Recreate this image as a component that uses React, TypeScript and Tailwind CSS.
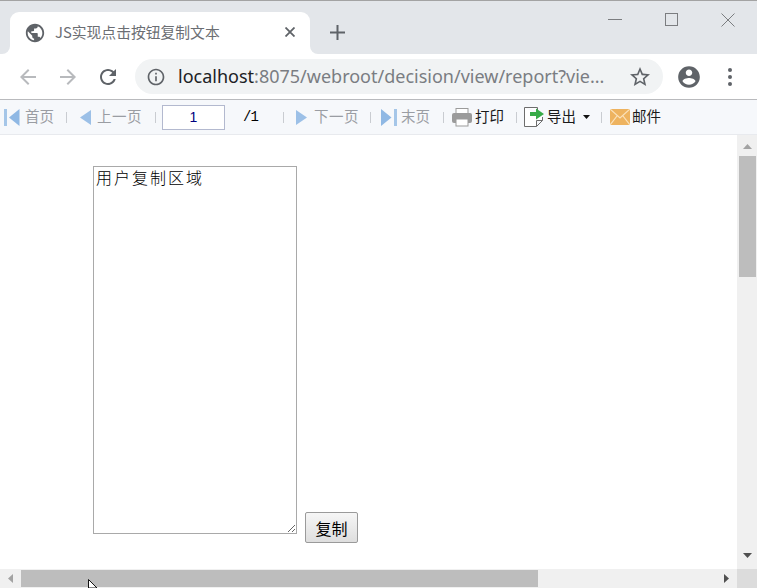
import React from 'react';

const cjk = "font-['Noto_Sans_CJK_SC','Noto_Sans',sans-serif]";

function Icon({ d, className }: { d: string; className: string }) {
  return (
    <svg viewBox="0 0 24 24" fill="currentColor" className={className}>
      <path d={d} fillRule="evenodd" />
    </svg>
  );
}

function Sep({ className }: { className: string }) {
  return <span className={`w-px h-[11px] bg-[#c9ccd1] shrink-0 ${className}`} />;
}

function Label({ children, dim, className = '' }: { children: string; dim?: boolean; className?: string }) {
  return (
    <span className={`text-[14.500px] leading-none mb-[2px] whitespace-nowrap shrink-0 ${dim ? 'text-[#9a9da3]' : 'text-[#1a1a1a]'} ${className}`}>
      {children}
    </span>
  );
}

function Toolbar() {
  return (
    <div className={`h-[35px] flex items-center bg-[#f6f8fb] border-b border-[#e8eaee] ${cjk}`}>
      <svg viewBox="0 0 16 17" className="w-[16px] h-[17px] ml-[4px] shrink-0">
        <rect x="0" y="0" width="3" height="17" fill="#a5c6e8" />
        <path d="M15.500 0v17L5 8.500z" fill="#8fb8e4" />
      </svg>
      <Label dim className="ml-[5px]">首页</Label>
      <Sep className="ml-[12px]" />
      <svg viewBox="0 0 11 15" className="w-[11px] h-[15px] ml-[13px] shrink-0">
        <path d="M11 0v15L0 7.500z" fill="#9cc0e7" />
      </svg>
      <Label dim className="ml-[6px] tracking-[0.500px]">上一页</Label>
      <Sep className="ml-[13px]" />
      <div className="ml-[6px] w-[63px] h-[25px] shrink-0 bg-white border border-[#b3b9cf] flex items-center justify-center text-[14px] text-[#000080] font-['Liberation_Sans',sans-serif]">
        1
      </div>
      <span className="ml-[18px] w-[15px] shrink-0 text-[14px] -tracking-[1px] text-black font-['Liberation_Mono',monospace]">/1</span>
      <Sep className="ml-[25px]" />
      <svg viewBox="0 0 11 15" className="w-[11px] h-[15px] ml-[12px] shrink-0">
        <path d="M0 0v15L11 7.500z" fill="#9cc0e7" />
      </svg>
      <Label dim className="ml-[7px] tracking-[0.500px]">下一页</Label>
      <Sep className="ml-[11px]" />
      <svg viewBox="0 0 16 17" className="w-[16px] h-[17px] ml-[10px] shrink-0">
        <path d="M0 0v17L10.500 8.500z" fill="#8fb8e4" />
        <rect x="13" y="0" width="3" height="17" fill="#a5c6e8" />
      </svg>
      <Label dim className="ml-[4px]">末页</Label>
      <Sep className="ml-[13px]" />
      <svg viewBox="0 0 20 19" className="w-[20px] h-[19px] ml-[8px] shrink-0">
        <rect x="4" y="0.500" width="12" height="5" fill="#fff" stroke="#9b9b9b" />
        <rect x="0" y="5" width="20" height="10" rx="2" fill="#9b9b9b" />
        <rect x="4" y="11" width="12" height="7" fill="#fff" stroke="#9b9b9b" />
      </svg>
      <Label className="ml-[3px]">打印</Label>
      <Sep className="ml-[12px]" />
      <svg viewBox="0 0 20 20" className="w-[20px] h-[20px] ml-[7px] shrink-0">
        <path d="M.5.500h13v3M.500.500v19h12l6-6V10M12.500 19.500v-6h6" fill="#fff" stroke="#6d6d6d" />
        <path d="M6 5h6V1.500L20 7l-8 5.500V9H6z" fill="#36ab47" />
      </svg>
      <Label className="ml-[3px]">导出</Label>
      <svg viewBox="0 0 7 4" className="w-[7px] h-[4px] ml-[7px] shrink-0">
        <path d="M0 0h7L3.500 4z" fill="#111" />
      </svg>
      <Sep className="ml-[11px]" />
      <svg viewBox="0 0 20 16" className="w-[20px] h-[16px] ml-[8px] shrink-0">
        <rect width="20" height="16" fill="#eeb35f" />
        <path d="M0 0l10 9 10-9M0 16l7-9M20 16l-7-9" fill="none" stroke="#fbe2bb" strokeWidth="1.200" />
      </svg>
      <Label className="ml-[2px]">邮件</Label>
    </div>
  );
}

export default function App() {
  return (
    <div className="relative w-[757px] h-[588px] flex flex-col overflow-hidden bg-white font-['Noto_Sans',sans-serif]">
      {/* Tab strip */}
      <div className="h-[54px] shrink-0 flex bg-[#e3e6ea] border-t border-[#a3a3a3]">
        <div className={`relative mt-[11px] ml-[10px] w-[300px] h-[42px] bg-white rounded-t-[9px] flex items-center ${cjk}`}>
          <span className="absolute -right-[8px] bottom-0 w-[8px] h-[8px] bg-white">
            <span className="block w-full h-full bg-[#e3e6ea] rounded-bl-[8px]" />
          </span>
          <span className="absolute -left-[8px] bottom-0 w-[8px] h-[8px] bg-white">
            <span className="block w-full h-full bg-[#e3e6ea] rounded-br-[8px]" />
          </span>
          <Icon
            className="w-[22px] h-[22px] ml-[14px] text-[#5f6368] shrink-0"
            d="M12 2C6.480 2 2 6.480 2 12s4.480 10 10 10 10-4.480 10-10S17.520 2 12 2zm-1 17.930c-3.950-.490-7-3.850-7-7.930 0-.620.080-1.210.210-1.790L9 15v1c0 1.100.900 2 2 2v1.930zm6.900-2.540c-.260-.810-1-1.390-1.900-1.390h-1v-3c0-.550-.450-1-1-1H8v-2h2c.550 0 1-.450 1-1V7h2c1.100 0 2-.900 2-2v-.410c2.930 1.190 5 4.060 5 7.410 0 2.080-.800 3.970-2.100 5.390z"
          />
          <span className="ml-[9px] mb-[2px] text-[14.800px] leading-none text-[#6b6e73] whitespace-nowrap">JS实现点击按钮复制文本</span>
          <svg viewBox="0 0 10 10" className="absolute left-[275px] top-[15px] w-[10px] h-[10px]">
            <path d="M.5.500l9 9M9.500.500l-9 9" stroke="#5f6368" strokeWidth="1.800" />
          </svg>
        </div>
        <svg viewBox="0 0 15 15" className="ml-[20px] mt-[24px] w-[15px] h-[15px]">
          <path d="M7.500 0v15M0 7.500h15" stroke="#5f6368" strokeWidth="2" />
        </svg>
        <div className="ml-auto flex items-start">
          <svg viewBox="0 0 14 14" className="mt-[11px] w-[14px] h-[14px]">
            <path d="M0 7.500h14" stroke="#7b7d80" />
          </svg>
          <svg viewBox="0 0 13 13" className="ml-[43px] mt-[12px] w-[13px] h-[13px]">
            <rect x="0.500" y="0.500" width="12" height="12" fill="none" stroke="#7b7d80" />
          </svg>
          <svg viewBox="0 0 14 14" className="ml-[43px] mr-[22px] mt-[12px] w-[14px] h-[14px]">
            <path d="M.5.500l13 13M13.500.500l-13 13" stroke="#7b7d80" />
          </svg>
        </div>
      </div>

      {/* Address bar */}
      <div className="h-[46px] shrink-0 flex items-center bg-white border-b border-[#b9babd]">
        <Icon
          className="ml-[16px] w-[24px] h-[24px] text-[#b8babd] shrink-0"
          d="M20 11H7.830l5.590-5.590L12 4l-8 8 8 8 1.410-1.410L7.830 13H20v-2z"
        />
        <Icon
          className="ml-[16px] w-[24px] h-[24px] text-[#b8babd] shrink-0"
          d="M12 4l-1.410 1.410L16.170 11H4v2h12.170l-5.580 5.590L12 20l8-8z"
        />
        <Icon
          className="ml-[16px] w-[24px] h-[24px] text-[#5f6368] shrink-0"
          d="M17.650 6.350C16.200 4.900 14.210 4 12 4c-4.420 0-7.990 3.580-7.990 8s3.570 8 7.990 8c3.730 0 6.840-2.550 7.730-6h-2.080c-.820 2.330-3.040 4-5.650 4-3.310 0-6-2.690-6-6s2.690-6 6-6c1.660 0 3.140.690 4.220 1.780L13 11h7V4l-2.350 2.350z"
        />
        <div className="ml-[15px] w-[528px] h-[35px] shrink-0 rounded-full bg-[#f1f3f4] flex items-center">
          <Icon
            className="ml-[11px] w-[20px] h-[20px] text-[#5f6368] shrink-0"
            d="M11 7h2v2h-2zm0 4h2v6h-2zm1-9C6.480 2 2 6.480 2 12s4.480 10 10 10 10-4.480 10-10S17.520 2 12 2zm0 18c-4.410 0-8-3.590-8-8s3.590-8 8-8 8 3.590 8 8-3.590 8-8 8z"
          />
          <span className="ml-[12px] mb-[2px] text-[18px] leading-none whitespace-nowrap text-[#7a7d82]">
            <span className="text-[#202124]">localhost</span>:8075/webroot/decision/view/report?vie...
          </span>
          <Icon
            className="ml-auto mr-[11px] w-[24px] h-[24px] text-[#5f6368] shrink-0"
            d="M22 9.240l-7.190-.620L12 2 9.190 8.630 2 9.240l5.460 4.730L5.820 21 12 17.270 18.180 21l-1.630-7.030L22 9.240zM12 15.400l-3.760 2.270 1-4.280-3.320-2.880 4.380-.380L12 6.100l1.710 4.040 4.380.380-3.320 2.880 1 4.280L12 15.400z"
          />
        </div>
        <Icon
          className="ml-[13px] w-[26px] h-[26px] text-[#5f6368] shrink-0"
          d="M12 2C6.480 2 2 6.480 2 12s4.480 10 10 10 10-4.480 10-10S17.520 2 12 2zm0 3c1.660 0 3 1.340 3 3s-1.340 3-3 3-3-1.340-3-3 1.340-3 3-3zm0 14.200c-2.500 0-4.710-1.280-6-3.220.030-1.990 4-3.080 6-3.080 1.990 0 5.970 1.090 6 3.080-1.290 1.940-3.500 3.220-6 3.220z"
        />
        <div className="ml-[26px] flex flex-col gap-[3px]">
          <span className="w-[4px] h-[4px] rounded-full bg-[#5f6368]" />
          <span className="w-[4px] h-[4px] rounded-full bg-[#5f6368]" />
          <span className="w-[4px] h-[4px] rounded-full bg-[#5f6368]" />
        </div>
      </div>

      <Toolbar />

      {/* Report body */}
      <div className="flex-1 min-h-0 flex">
        <div className={`flex-1 pl-[93px] pt-[31px] flex items-start ${cjk}`}>
          <textarea
            readOnly
            defaultValue="用户复制区域"
            className="w-[204px] h-[368px] border border-[#a9a9a9] px-[2px] py-0 text-[16px] leading-[20px] tracking-[2px] text-black font-light outline-none overflow-hidden resize"
          />
          <button className="ml-[8px] mt-[346px] w-[53px] h-[31px] border border-[#9a9a9a] rounded-[2px] bg-gradient-to-b from-[#f6f6f6] to-[#dedede] text-[16px] leading-none text-black">
            复制
          </button>
        </div>
        {/* vertical scrollbar */}
        <div className="w-[20px] shrink-0 bg-[#f0f0f0] flex flex-col items-center">
          <svg viewBox="0 0 9 5" className="mt-[9px] w-[9px] h-[5px]">
            <path d="M4.500 0L9 5H0z" fill="#a3a3a3" />
          </svg>
          <div className="mt-[7px] w-[17px] h-[121px] bg-[#bdbdbd]" />
          <svg viewBox="0 0 9 5" className="mt-auto mb-[11px] w-[9px] h-[5px]">
            <path d="M4.500 5L9 0H0z" fill="#505050" />
          </svg>
        </div>
      </div>

      {/* horizontal scrollbar */}
      <div className="h-[19px] shrink-0 flex items-center bg-[#f0f0f0]">
        <svg viewBox="0 0 5 9" className="ml-[8px] w-[5px] h-[9px] shrink-0">
          <path d="M0 4.500L5 0v9z" fill="#a3a3a3" />
        </svg>
        <div className="ml-[8px] w-[517px] h-[17px] bg-[#bdbdbd] shrink-0" />
        <svg viewBox="0 0 5 9" className="ml-[186px] w-[5px] h-[9px] shrink-0">
          <path d="M5 4.500L0 0v9z" fill="#505050" />
        </svg>
        <div className="ml-auto w-[20px] h-full bg-[#dcdcdc]" />
      </div>

      {/* mouse pointer */}
      <svg viewBox="0 0 10 9" className="absolute left-[88px] top-[579px] w-[10px] h-[9px]">
        <path d="M.5.500L9 9H.5z" fill="#fff" stroke="#111" strokeWidth="1" />
      </svg>
    </div>
  );
}
